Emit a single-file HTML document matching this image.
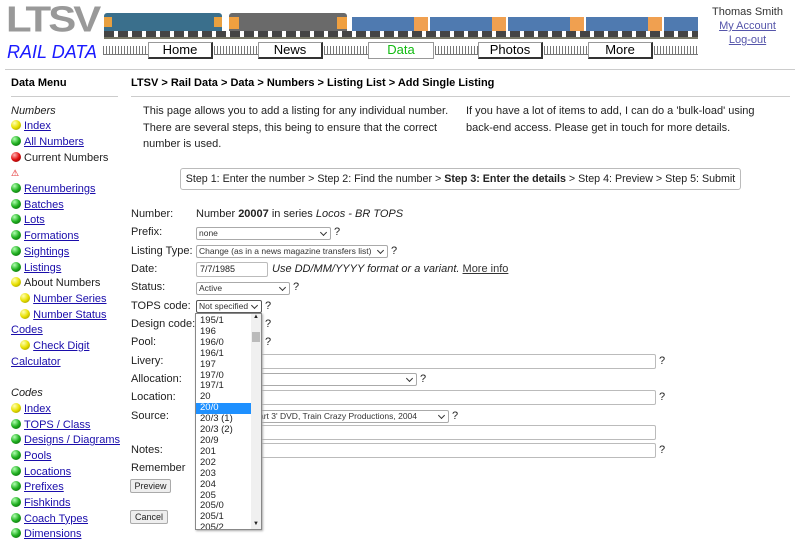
<!DOCTYPE html>
<html><head><meta charset="utf-8"><style>
*{margin:0;padding:0;box-sizing:border-box}
body{width:800px;height:539px;overflow:hidden;background:#fff;font-family:"Liberation Sans",Arial,sans-serif;font-size:11px;color:#222;position:relative}
.a{position:absolute;white-space:nowrap}
a{color:#1a0dab;text-decoration:underline}
.dot{display:inline-block;width:10px;height:10px;border-radius:50%;vertical-align:-1px;margin-right:3px}
.y{background:radial-gradient(circle at 35% 30%,#ffffb0,#e8e000 50%,#8a8200)}
.g{background:radial-gradient(circle at 35% 30%,#b0ffb0,#20b020 50%,#065006)}
.r{background:radial-gradient(circle at 35% 30%,#ffb0b0,#e01010 50%,#700000)}
.btn{position:absolute;top:42px;height:17px;background:#fff;border:1px solid #999;border-right:2px solid #333;border-bottom:2px solid #333;text-align:center;font-size:13px;line-height:14px;color:#000}
.rail{position:absolute;top:46px;height:9px;background:repeating-linear-gradient(90deg,#777 0 1px,#fff 1px 3px);border-bottom:1px solid #777}
.lab{position:absolute;left:131px}
.sel{position:absolute;height:13px;border:1px solid #aaa;border-radius:2px;font-size:8.5px;line-height:11px;padding-left:2px;color:#333;background:#fff;overflow:hidden}
.sel:after{content:"";position:absolute;right:4px;top:2px;width:4px;height:4px;border-right:1px solid #333;border-bottom:1px solid #333;transform:rotate(45deg)}
.inp{position:absolute;height:15px;border:1px solid #bbb;border-radius:2px;background:#fff}
</style></head><body>
<!-- logo -->
<div class="a" style="left:6px;top:1px;font-size:42px;font-weight:bold;color:#999;letter-spacing:-3px;line-height:44px;transform:scaleY(0.85);transform-origin:top left">LTSV</div>
<div class="a" style="left:7px;top:42px;font-size:18px;font-style:italic;color:#1a1aff;line-height:21px">RAIL DATA</div>
<!-- trains -->
<div class="a" style="left:104px;top:13px;width:118px;height:21px;background:#3a6f8c;border-radius:3px"></div>
<div class="a" style="left:104px;top:17px;width:8px;height:10px;background:#e8a040"></div>
<div class="a" style="left:214px;top:17px;width:8px;height:10px;background:#e8a040"></div>
<div class="a" style="left:229px;top:13px;width:118px;height:21px;background:#6a6a6a;border-radius:3px;border-bottom:2px solid #d22"></div>
<div class="a" style="left:229px;top:17px;width:10px;height:12px;background:#f0a040"></div>
<div class="a" style="left:337px;top:17px;width:10px;height:12px;background:#f0a040"></div>
<div class="a" style="left:352px;top:17px;width:346px;height:14px;background:repeating-linear-gradient(90deg,#4f7ab0 0 62px,#f0a050 62px 76px,#fff 76px 78px)"></div>
<div class="a" style="left:104px;top:31px;width:594px;height:6px;background:repeating-linear-gradient(90deg,#444 0 10px,#fff 10px 14px)"></div>
<div class="a" style="left:104px;top:37px;width:594px;height:2px;background:#776"></div>
<div class="rail" style="left:103px;width:45px"></div>
<div class="rail" style="left:214px;width:44px"></div>
<div class="rail" style="left:324px;width:44px"></div>
<div class="rail" style="left:435px;width:43px"></div>
<div class="rail" style="left:544px;width:44px"></div>
<div class="rail" style="left:654px;width:44px"></div>
<div class="btn" style="left:148px;width:65px">Home</div>
<div class="btn" style="left:258px;width:65px">News</div>
<div class="btn" style="left:368px;width:66px;color:#1b1;border:1px solid #999">Data</div>
<div class="btn" style="left:478px;width:65px">Photos</div>
<div class="btn" style="left:588px;width:65px">More</div>
<div class="a" style="left:700px;top:5px;width:95px;text-align:center;line-height:14px;color:#333">Thomas Smith<br><a style="color:#55a">My Account</a><br><a style="color:#55a">Log-out</a></div>
<div class="a" style="left:5px;top:69px;width:790px;height:1px;background:#ccc"></div>
<!-- sidebar -->
<div class="a" style="left:11px;top:77px;font-weight:bold;color:#000">Data Menu</div>
<div class="a" style="left:11px;top:96px;width:107px;height:1px;background:#ccc"></div>
<div class="a" style="left:11px;top:103.5px;line-height:15.7px">
<i>Numbers</i><br>
<span class="dot y"></span><a>Index</a><br>
<span class="dot g"></span><a>All Numbers</a><br>
<span class="dot r"></span>Current Numbers<br>
<span style="color:#d00;font-size:9px">⚠</span><br>
<span class="dot g"></span><a>Renumberings</a><br>
<span class="dot g"></span><a>Batches</a><br>
<span class="dot g"></span><a>Lots</a><br>
<span class="dot g"></span><a>Formations</a><br>
<span class="dot g"></span><a>Sightings</a><br>
<span class="dot g"></span><a>Listings</a><br>
<span class="dot y"></span>About Numbers<br>
&nbsp;&nbsp;&nbsp;<span class="dot y"></span><a>Number Series</a><br>
&nbsp;&nbsp;&nbsp;<span class="dot y"></span><a>Number Status</a><br>
<a>Codes</a><br>
&nbsp;&nbsp;&nbsp;<span class="dot y"></span><a>Check Digit</a><br>
<a>Calculator</a><br><br>
<i>Codes</i><br>
<span class="dot y"></span><a>Index</a><br>
<span class="dot g"></span><a>TOPS / Class</a><br>
<span class="dot g"></span><a>Designs / Diagrams</a><br>
<span class="dot g"></span><a>Pools</a><br>
<span class="dot g"></span><a>Locations</a><br>
<span class="dot g"></span><a>Prefixes</a><br>
<span class="dot g"></span><a>Fishkinds</a><br>
<span class="dot g"></span><a>Coach Types</a><br>
<span class="dot g"></span><a>Dimensions</a>
</div>
<!-- main -->
<div class="a" style="left:131px;top:77px;font-weight:bold;color:#000">LTSV &gt; Rail Data &gt; Data &gt; Numbers &gt; Listing List &gt; Add Single Listing</div>
<div class="a" style="left:131px;top:96px;width:659px;height:1px;background:#ccc"></div>
<div class="a" style="left:143px;top:103px;line-height:16.5px">This page allows you to add a listing for any individual number.<br>There are several steps, this being to ensure that the correct<br>number is used.</div>
<div class="a" style="left:466px;top:103px;line-height:16.5px">If you have a lot of items to add, I can do a 'bulk-load' using<br>back-end access. Please get in touch for more details.</div>
<div class="a" style="left:180px;top:168px;width:561px;height:22px;border:1px solid #bbb;border-radius:3px;text-align:center;line-height:20px;font-size:10.7px">Step 1: Enter the number &gt; Step 2: Find the number &gt; <b>Step 3: Enter the details</b> &gt; Step 4: Preview &gt; Step 5: Submit</div>
<div class="lab" style="top:208px">Number:</div><div class="a" style="left:196px;top:208px">Number <b>20007</b> in series <i>Locos - BR TOPS</i></div>
<div class="lab" style="top:226px">Prefix:</div><div class="sel" style="left:196px;top:227px;width:135px">none</div><div class="a" style="left:334px;top:226px">?</div>
<div class="lab" style="top:245px">Listing Type:</div><div class="sel" style="left:196px;top:245px;width:192px;padding-right:12px">Change (as in a news magazine transfers list)</div><div class="a" style="left:391px;top:245px">?</div>
<div class="lab" style="top:263px">Date:</div><div class="inp" style="left:196px;top:262px;width:72px;font-size:9px;padding:1px 3px">7/7/1985</div><div class="a" style="left:272px;top:263px"><i>Use DD/MM/YYYY format or a variant.</i> <a style="color:#333">More info</a></div>
<div class="lab" style="top:281px">Status:</div><div class="sel" style="left:196px;top:282px;width:94px">Active</div><div class="a" style="left:293px;top:281px">?</div>
<div class="lab" style="top:300px">TOPS code:</div><div class="sel" style="left:196px;top:300px;width:66px;border-color:#555;padding-right:10px">Not specified</div><div class="a" style="left:265px;top:300px">?</div>
<div class="lab" style="top:318px">Design code:</div><div class="a" style="left:265px;top:318px">?</div>
<div class="lab" style="top:336px">Pool:</div><div class="a" style="left:265px;top:336px">?</div>
<div class="lab" style="top:355px">Livery:</div><div class="inp" style="left:196px;top:354px;width:460px"></div><div class="a" style="left:659px;top:355px">?</div>
<div class="lab" style="top:373px">Allocation:</div><div class="sel" style="left:196px;top:373px;width:221px"></div><div class="a" style="left:420px;top:373px">?</div>
<div class="lab" style="top:391px">Location:</div><div class="inp" style="left:196px;top:390px;width:460px"></div><div class="a" style="left:659px;top:391px">?</div>
<div class="lab" style="top:410px">Source:</div><div class="sel" style="left:196px;top:410px;width:253px;padding-left:62px">art 3' DVD, Train Crazy Productions, 2004</div><div class="a" style="left:452px;top:410px">?</div>
<div class="inp" style="left:196px;top:425px;width:460px"></div>
<div class="lab" style="top:444px">Notes:</div><div class="inp" style="left:196px;top:443px;width:460px"></div><div class="a" style="left:659px;top:444px">?</div>
<div class="lab" style="top:462px">Remember</div>
<div class="a" style="left:130px;top:479px;width:41px;height:14px;border:1px solid #aaa;background:#eee;border-radius:2px;font-size:9px;text-align:center;line-height:12px">Preview</div>
<div class="a" style="left:130px;top:510px;width:38px;height:14px;border:1px solid #aaa;background:#eee;border-radius:2px;font-size:9px;text-align:center;line-height:12px">Cancel</div>
<!-- dropdown list -->
<div class="a" style="left:195px;top:313px;width:67px;height:217px;background:#fff;border:1px solid #888;box-shadow:1px 1px 2px #aaa;font-size:9.5px;line-height:10.9px;padding:2px 0 0 4px;overflow:hidden">
195/1<br>196<br>196/0<br>196/1<br>197<br>197/0<br>197/1<br>20<br><span style="display:block;margin-left:-4px;padding-left:4px;width:55px;background:#1e90ff;color:#fff">20/0</span>20/3 (1)<br>20/3 (2)<br>20/9<br>201<br>202<br>203<br>204<br>205<br>205/0<br>205/1<br>205/2
</div>
<div class="a" style="left:251px;top:314px;width:10px;height:215px;background:#f0f0f0"></div>
<div class="a" style="left:252px;top:332px;width:8px;height:10px;background:#bbb"></div>
<div class="a" style="left:253px;top:314px;font-size:6px">▲</div>
<div class="a" style="left:253px;top:521px;font-size:6px">▼</div>
</body></html>
